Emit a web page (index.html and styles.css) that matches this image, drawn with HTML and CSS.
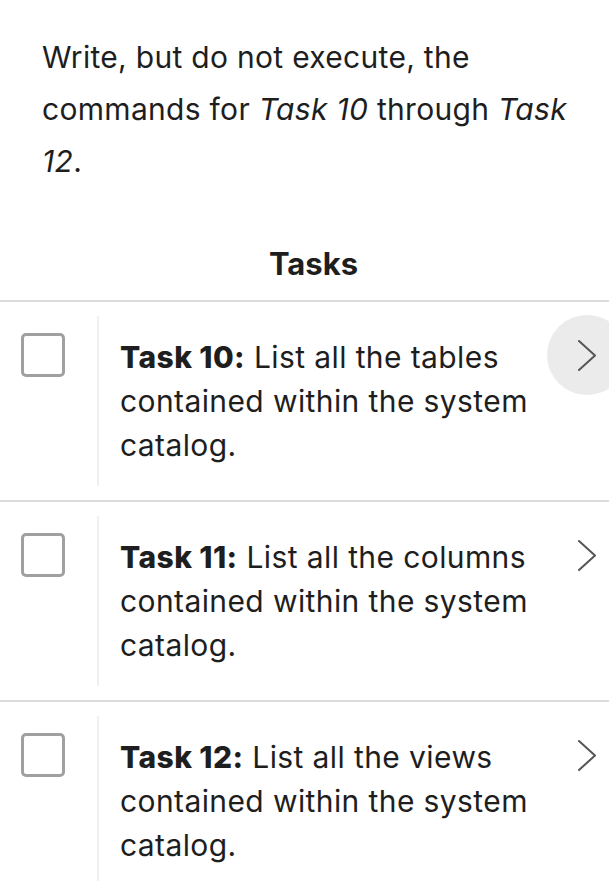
FILE: index.html
```html
<!DOCTYPE html>
<html lang="en">
<head>
<meta charset="utf-8">
<title>Tasks</title>
<link rel="stylesheet" href="styles.css">
</head>
<body>
<div class="page">
  <p class="intro">Write, but do not execute, the commands for <em>Task 10</em> through <em>Task 12</em>.</p>
  <h2 class="tasks-title">Tasks</h2>
  <ul class="task-list">
    <li class="task">
      <div class="check-col"><span class="checkbox"></span></div>
      <div class="task-body"><strong>Task 10:</strong> List all the tables contained within the system catalog.</div>
      <div class="chev-col"><span class="chev hover"><svg viewBox="0 0 18 31" width="18" height="31"><path d="M1 1 L17 15.5 L1 30" fill="none" stroke="#555" stroke-width="2" stroke-linecap="round" stroke-linejoin="round"/></svg></span></div>
    </li>
    <li class="task">
      <div class="check-col"><span class="checkbox"></span></div>
      <div class="task-body"><strong>Task 11:</strong> List all the columns contained within the system catalog.</div>
      <div class="chev-col"><span class="chev"><svg viewBox="0 0 18 31" width="18" height="31"><path d="M1 1 L17 15.5 L1 30" fill="none" stroke="#555" stroke-width="2" stroke-linecap="round" stroke-linejoin="round"/></svg></span></div>
    </li>
    <li class="task">
      <div class="check-col"><span class="checkbox"></span></div>
      <div class="task-body"><strong>Task 12:</strong> List all the views contained within the system catalog.</div>
      <div class="chev-col"><span class="chev"><svg viewBox="0 0 18 31" width="18" height="31"><path d="M1 1 L17 15.5 L1 30" fill="none" stroke="#555" stroke-width="2" stroke-linecap="round" stroke-linejoin="round"/></svg></span></div>
    </li>
  </ul>
</div>
</body>
</html>
```
FILE: styles.css
```css
html, body {
  margin: 0;
  padding: 0;
  overflow: hidden;
  background: #fff;
}
.page {
  width: 627px;
  font-family: Inter, "Noto Sans", sans-serif;
  color: #1e1e1e;
}
.intro {
  margin: 0;
  padding: 31px 40px 0 42px;
  font-size: 30px;
  line-height: 52px;
  letter-spacing: 0.3px;
}
.intro em {
  font-style: italic;
}
.tasks-title {
  margin: 55px 0 0;
  padding-bottom: 14px;
  text-align: center;
  font-size: 31px;
  line-height: 44px;
  font-weight: 700;
  border-bottom: 2px solid #dcdcdc;
}
.task-list {
  list-style: none;
  margin: 0;
  padding: 0;
}
.task {
  display: flex;
  padding: 14px 0;
  border-bottom: 2px solid #dcdcdc;
}
.check-col {
  width: 97px;
  flex: none;
  padding-top: 17px;
  padding-left: 21px;
  box-sizing: border-box;
}
.checkbox {
  display: block;
  width: 44px;
  height: 44px;
  box-sizing: border-box;
  border: 3px solid #a0a0a0;
  border-radius: 5px;
}
.task-body {
  flex: 1;
  border-left: 2px solid #efefef;
  padding: 19px 0 19px 21px;
  font-size: 30px;
  line-height: 44px;
  letter-spacing: 0.4px;
}
.task-body strong {
  font-weight: 800;
}
.chev-col {
  flex: none;
  width: 80px;
}
.chev {
  display: flex;
  align-items: center;
  justify-content: center;
  width: 80px;
  height: 80px;
  border-radius: 50%;
  margin-top: -1px;
}
.chev.hover {
  background: #ebebeb;
}
```
